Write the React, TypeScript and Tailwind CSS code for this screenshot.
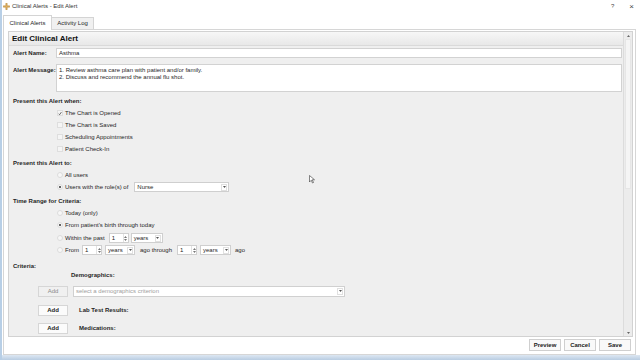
import React from 'react';

function Check({ checked, label }: { checked?: boolean; label: string }) {
  return (
    <div className="flex h-[12px] items-center pl-[48px]">
      <div className="flex h-[6px] w-[6px] items-center justify-center border border-[#dedede] bg-[#f5f5f5]">
        {checked && (
          <svg width="5" height="5" viewBox="0 0 10 10">
            <path d="M1.5 5.5 L4 8 L8.5 1.5" fill="none" stroke="#333" strokeWidth="1.8" />
          </svg>
        )}
      </div>
      <span className="ml-[2px]">{label}</span>
    </div>
  );
}

function Radio({ on }: { on?: boolean }) {
  return (
    <div className="flex h-[6px] w-[6px] shrink-0 items-center justify-center rounded-full border border-[#dcdcdc] bg-[#f7f7f7]">
      {on && <div className="h-[2px] w-[2px] rounded-full bg-[#333]" />}
    </div>
  );
}

function Spinner() {
  return (
    <div className="flex h-[10px] w-[20px] items-center border border-[#cfcfcf] bg-white">
      <span className="flex-1 pl-[2px]">1</span>
      <div className="flex h-full w-[5px] flex-col items-center justify-center gap-[1px] border-l border-[#e2e2e2]">
        <svg width="3" height="2" viewBox="0 0 6 4"><path d="M0 4 L3 0 L6 4Z" fill="#777" /></svg>
        <svg width="3" height="2" viewBox="0 0 6 4"><path d="M0 0 L3 4 L6 0Z" fill="#777" /></svg>
      </div>
    </div>
  );
}

function Select({ value, w, placeholder }: { value: string; w: string; placeholder?: boolean }) {
  return (
    <div className={`flex h-[10px] items-center border border-[#cfcfcf] bg-white ${w}`}>
      <span className={`flex-1 pl-[2px] ${placeholder ? 'text-[#9a9a9a]' : ''}`}>{value}</span>
      <div className="mr-[1px] flex h-[7px] w-[6px] items-center justify-center border border-[#e0e0e0]">
        <svg width="3" height="2" viewBox="0 0 6 4"><path d="M0 0 L3 4 L6 0Z" fill="#555" /></svg>
      </div>
    </div>
  );
}

function AddBtn({ disabled }: { disabled?: boolean }) {
  return (
    <div
      className={`ml-[29px] flex h-[11px] w-[30px] items-center justify-center border border-[#d6d6d6] ${
        disabled ? 'bg-[#f0f0f0] text-[#8a8a8a]' : 'bg-[#fbfbfb] font-bold text-[#222]'
      }`}
    >
      Add
    </div>
  );
}

function BottomBtn({ label }: { label: string }) {
  return (
    <div className="flex h-[12px] w-[32px] items-center justify-center border border-[#cfcfcf] bg-[#f9f9f9] font-bold text-[#222]">
      {label}
    </div>
  );
}

export default function App() {
  return (
    <div className="relative h-[360px] w-[640px] overflow-hidden bg-white font-['Liberation_Sans',Arial,sans-serif] text-[6px] text-[#1f1f1f]">
      <div className="flex h-full flex-col border-l-2 border-[#b8cfe6]">
        {/* title bar */}
        <div className="flex h-[13px] items-center">
          <svg className="ml-[1px]" width="7" height="7" viewBox="0 0 10 10">
            <path d="M4 0.5 H6 V4 H9.5 V6 H6 V9.5 H4 V6 H0.5 V4 H4Z" fill="#e0b060" stroke="#a87a2a" strokeWidth="0.6" />
          </svg>
          <span className="ml-[2px] text-[#333]">Clinical Alerts - Edit Alert</span>
          <span className="ml-auto text-[#444]">?</span>
          <span className="ml-[15px] mr-[6px] text-[8px] leading-none text-[#444]">×</span>
        </div>

        {/* tabs */}
        <div className="flex h-[16px] items-end pl-[1px]">
          <div className="relative -mb-px flex h-[15px] w-[49px] items-center justify-center border border-b-0 border-[#d4d4d4] bg-white">
            Clinical Alerts
          </div>
          <div className="flex h-[12px] w-[42px] items-center justify-center border border-b-0 border-l-0 border-[#d4d4d4] bg-[#f0f0f0]">
            Activity Log
          </div>
        </div>

        {/* tab content */}
        <div className="ml-[1px] mr-[4px] flex h-[326px] flex-col border border-[#d6d6d6] bg-white pl-[4px] pr-[2px] pt-[1px]">
          <div className="flex h-[306px] border border-[#d2d2d2] bg-[#efefef]">
            <div className="flex flex-1 flex-col overflow-hidden">
              <div className="flex h-[14px] items-center border-b border-[#dadada] bg-gradient-to-b from-[#f7f7f7] to-[#e8e8e8] pl-[3px] text-[8px] font-bold text-[#111]">
                Edit Clinical Alert
              </div>

              <div className="mt-[2px] flex h-[10px] items-center pl-[4px] pr-[1px]">
                <span className="w-[43px] font-bold">Alert Name:</span>
                <div className="flex h-full flex-1 items-center border border-[#d2d2d2] bg-white pl-[2px]">Asthma</div>
              </div>

              <div className="mt-[6px] flex h-[28px] pl-[4px] pr-[1px]">
                <span className="w-[43px] pt-[2px] font-bold">Alert Message:</span>
                <div className="flex-1 border border-[#d2d2d2] bg-white pl-[2px] pt-[2px] leading-[7px]">
                  <div>1. Review asthma care plan with patient and/or family.</div>
                  <div>2. Discuss and recommend the annual flu shot.</div>
                </div>
              </div>

              <div className="mt-[4px] flex h-[11px] items-center pl-[4px] font-bold">Present this Alert when:</div>
              <Check checked label="The Chart is Opened" />
              <Check label="The Chart is Saved" />
              <Check label="Scheduling Appointments" />
              <Check label="Patient Check-In" />

              <div className="mt-[2px] flex h-[12px] items-center pl-[4px] font-bold">Present this Alert to:</div>
              <div className="flex h-[12px] items-center gap-[2px] pl-[48px]">
                <Radio />
                <span>All users</span>
              </div>
              <div className="flex h-[12px] items-center gap-[2px] pl-[48px]">
                <Radio on />
                <span>Users with the role(s) of</span>
                <div className="ml-[4px]">
                  <Select value="Nurse" w="w-[95px]" />
                </div>
              </div>

              <div className="mt-[3px] flex h-[11px] items-center pl-[4px] font-bold">Time Range for Criteria:</div>
              <div className="flex h-[12px] items-center gap-[2px] pl-[48px]">
                <Radio />
                <span>Today (only)</span>
              </div>
              <div className="flex h-[12px] items-center gap-[2px] pl-[48px]">
                <Radio on />
                <span>From patient's birth through today</span>
              </div>
              <div className="mt-[1px] flex h-[12px] items-center gap-[2px] pl-[48px]">
                <Radio />
                <span className="mr-[2px]">Within the past</span>
                <Spinner />
                <Select value="years" w="w-[32px]" />
              </div>
              <div className="flex h-[12px] items-center gap-[2px] pl-[48px]">
                <Radio />
                <span className="mr-[1px]">From</span>
                <Spinner />
                <div className="ml-[1px]">
                  <Select value="years" w="w-[30px]" />
                </div>
                <span className="mx-[3px]">ago through</span>
                <Spinner />
                <div className="ml-[1px]">
                  <Select value="years" w="w-[31px]" />
                </div>
                <span className="ml-[2px]">ago</span>
              </div>

              <div className="mt-[5px] flex h-[10px] items-center pl-[4px] font-bold">Criteria:</div>
              <div className="flex h-[9px] items-center pl-[62px] font-bold">Demographics:</div>
              <div className="mt-[5px] flex h-[12px] items-center">
                <AddBtn disabled />
                <div className="ml-[5px] flex h-[11px] w-[272px] items-center border border-[#d0d0d0] bg-white">
                  <span className="flex-1 pl-[2px] text-[#a0a0a0]">select a demographics criterion</span>
                  <div className="mr-[1px] flex h-[7px] w-[6px] items-center justify-center border border-[#e0e0e0]">
                    <svg width="3" height="2" viewBox="0 0 6 4"><path d="M0 0 L3 4 L6 0Z" fill="#555" /></svg>
                  </div>
                </div>
              </div>
              <div className="mt-[7px] flex h-[12px] items-center">
                <AddBtn />
                <span className="ml-[11px] font-bold">Lab Test Results:</span>
              </div>
              <div className="mt-[6px] flex h-[12px] items-center">
                <AddBtn />
                <span className="ml-[11px] font-bold">Medications:</span>
              </div>
            </div>

            {/* scrollbar */}
            <div className="flex w-[9px] flex-col border-l border-[#dcdcdc] bg-[#ececec]">
              <div className="flex h-[7px] items-center justify-center">
                <svg width="3" height="2" viewBox="0 0 6 4"><path d="M0 4 L3 0 L6 4Z" fill="#666" /></svg>
              </div>
              <div className="mx-[1px] h-[150px] border border-[#e6e6e6] bg-[#f5f5f5]" />
              <div className="flex-1" />
              <div className="flex h-[7px] items-center justify-center">
                <svg width="3" height="2" viewBox="0 0 6 4"><path d="M0 0 L3 4 L6 0Z" fill="#666" /></svg>
              </div>
            </div>
          </div>

          <div className="mt-[2px] flex justify-end gap-[3px] pr-[2px]">
            <BottomBtn label="Preview" />
            <BottomBtn label="Cancel" />
            <BottomBtn label="Save" />
          </div>
        </div>

        <div className="flex-1 bg-gradient-to-b from-[#dde7f2] to-[#b9cde2]" />
      </div>

      {/* mouse pointer */}
      <svg className="absolute left-[309px] top-[175px]" width="6" height="9" viewBox="0 0 12 18">
        <path d="M1 1 L1 14 L4.5 10.5 L7 16 L9 15 L6.5 9.5 L11 9.5Z" fill="#fff" stroke="#333" strokeWidth="1.2" />
      </svg>
    </div>
  );
}
